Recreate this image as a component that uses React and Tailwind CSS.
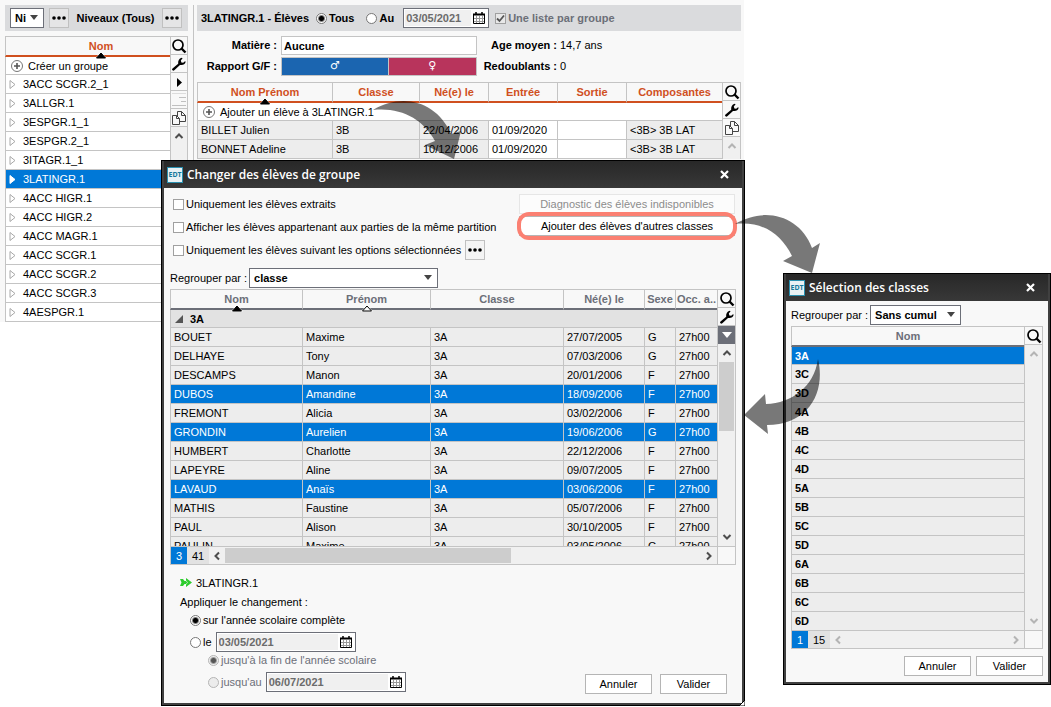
import React from 'react';

const groupes = [
  '3ACC SCGR.2_1', '3ALLGR.1', '3ESPGR.1_1', '3ESPGR.2_1', '3ITAGR.1_1', '3LATINGR.1', '4ACC HIGR.1',
  '4ACC HIGR.2', '4ACC MAGR.1', '4ACC SCGR.1', '4ACC SCGR.2', '4ACC SCGR.3', '4AESPGR.1',
];

const inscrits = [
  { nom: 'BILLET Julien', classe: '3B', ne: '22/04/2006', entree: '01/09/2020', composantes: '<3B> 3B LAT' },
  { nom: 'BONNET Adeline', classe: '3B', ne: '10/12/2006', entree: '01/09/2020', composantes: '<3B> 3B LAT' },
];

const eleves = [
  ['BOUET', 'Maxime', '27/07/2005', 'G'],
  ['DELHAYE', 'Tony', '07/03/2006', 'G'],
  ['DESCAMPS', 'Manon', '20/01/2006', 'F'],
  ['DUBOS', 'Amandine', '18/09/2006', 'F'],
  ['FREMONT', 'Alicia', '03/02/2006', 'F'],
  ['GRONDIN', 'Aurelien', '19/06/2006', 'G'],
  ['HUMBERT', 'Charlotte', '22/12/2006', 'F'],
  ['LAPEYRE', 'Aline', '09/07/2005', 'F'],
  ['LAVAUD', 'Anaïs', '03/06/2006', 'F'],
  ['MATHIS', 'Faustine', '05/07/2006', 'F'],
  ['PAUL', 'Alison', '30/10/2005', 'F'],
  ['PAULIN', 'Maxime', '03/05/2006', 'G'],
];
const selection = ['DUBOS', 'GRONDIN', 'LAVAUD'];

const classes = ['3A', '3C', '3D', '4A', '4B', '4C', '4D', '5A', '5B', '5C', '5D', '6A', '6B', '6C', '6D'];

/* Icons */
const SearchIcon = () => (
  <svg viewBox="0 0 16 16" className="w-4 h-4" fill="none" stroke="#000">
    <circle cx="7" cy="7" r="5" strokeWidth="1.7" />
    <path d="M10.5 10.5l4 4" strokeWidth="2.4" />
  </svg>
);

const WrenchIcon = () => (
  <svg viewBox="0 0 16 16" className="w-4 h-4" fill="#000">
    <path d="M1.500 14.300a1.200 1.200 0 0 1 0-1.800L7.200 7.800C6.800 5 8 2.400 10.800 1.800L11.600 2.300L9.800 4.600L10.400 6.400L12.200 6.800L14 5.200L14.700 5.800C14 8.300 11.800 9.600 9 8.900L3.300 14.300a1.300 1.300 0 0 1-1.800 0z" />
  </svg>
);

const PagesIcon = () => (
  <svg viewBox="0 0 16 16" className="w-4 h-4" fill="#f8f8f8" stroke="#444">
    <path d="M6.500 1.500h4l4 4v6h-8z" />
    <path d="M10.500 1.500v4h4" fill="none" />
    <path d="M1.500 5.500h4l3 3v6h-7z" />
    <path d="M5.500 5.500v3h3" fill="none" />
  </svg>
);

const IndentIcon = () => (
  <svg viewBox="0 0 16 16" className="w-4 h-4" stroke="#c0c0c0">
    <path d="M1 1.500h14" stroke="#dcdcdc" />
    <path d="M8 5.500h7M10 9.500h5M1 13.500h14" />
  </svg>
);

const PlayIcon = () => (
  <svg viewBox="0 0 16 16" className="w-4 h-4">
    <path d="M6 4l5 4.500l-5 4.500z" fill="#000" />
  </svg>
);

const Chevron = ({ d, off }) => (
  <svg viewBox="0 0 10 10" className="w-2.5 h-2.5" fill="none" stroke={off ? '#b4b4b4' : '#4d4d4d'} strokeWidth="2">
    <path d={d} />
  </svg>
);
const UP = 'M1.500 7L5 3.500L8.500 7';
const DOWN = 'M1.500 3L5 6.500L8.500 3';
const LEFT = 'M7 1.500L3.500 5L7 8.500';
const RIGHT = 'M3 1.500L6.500 5L3 8.500';

const CalendarIcon = () => (
  <svg viewBox="0 0 12 12" className="w-3 h-3" fill="none" stroke="#000">
    <path d="M.5 2.500h11v9H.5z" />
    <path d="M0 2.500h12" strokeWidth="2" />
    <path d="M3 0v3M9 0v3" strokeWidth="1.500" />
    <path d="M3.500 4v7M6.500 4v7M9.500 4v7M1 6.500h10M1 9.500h10" stroke="#999" />
  </svg>
);

const PlusIcon = () => (
  <svg viewBox="0 0 14 14" className="w-3.5 h-3.5 shrink-0" fill="none">
    <circle cx="7" cy="7" r="5.500" stroke="#777" />
    <path d="M7 4v6M4 7h6" stroke="#555" strokeWidth="1.600" />
  </svg>
);

const SortMark = ({ fill }) => (
  <svg viewBox="0 0 12 7" className="absolute left-1/2 -bottom-1 -ml-1.5 w-3 h-[7px]">
    <path d="M6 0l6 6.500H0z" fill="#fff" />
    <path d="M6 1l4.500 5h-9z" fill={fill} stroke="#000" />
  </svg>
);

const Expander = ({ active }) => (
  <svg viewBox="0 0 7 11" className="w-[7px] h-[11px] shrink-0">
    <path d="M1 1.500l5 4l-5 4z" fill="#fff" stroke={active ? '#fff' : '#a8a8a8'} />
  </svg>
);

const DotsButton = ({ label }) => (
  <button aria-label={label} className="flex w-5 h-5 items-center justify-center border border-[#c0c0c0] bg-[#f0f0f0]/50">
    <svg viewBox="0 0 14 4" className="w-3.5 h-1">
      <circle cx="2" cy="2" r="1.800" /><circle cx="7" cy="2" r="1.800" /><circle cx="12" cy="2" r="1.800" />
    </svg>
  </button>
);

/* Controls */
const Select = ({ label, value, className }) => (
  <span className={`relative flex h-5 ${className}`}>
    <select aria-label={label} className="w-full appearance-none border border-[#6c6f78] bg-white pl-1 text-[11px] font-bold leading-4 outline-none">
      <option>{value}</option>
    </select>
    <svg viewBox="0 0 8 5" className="absolute right-1.5 top-[7px] w-2 h-[5px]"><path d="M0 0h8L4 5z" fill="#444" /></svg>
  </span>
);

const Radio = ({ name, label, checked, disabled, className = '' }) => (
  <label className={`flex items-center gap-0.5 ${disabled ? 'text-[#6c6f78]' : ''} ${className}`}>
    <input
      type="radio"
      name={name}
      defaultChecked={checked}
      disabled={disabled}
      className="w-[11px] h-[11px] shrink-0 appearance-none rounded-full border border-[#777] bg-white checked:bg-[radial-gradient(circle,#000_2px,#fff_4px)] disabled:border-[#b5b5b5] disabled:bg-[#ececec] disabled:checked:bg-[radial-gradient(circle,#555_2px,#eee_4px)]"
    />
    {label}
  </label>
);

const Check = ({ label, checked, disabled }) => (
  <label className={`relative flex items-center gap-0.5 ${disabled ? 'text-[#6c6f78]' : ''}`}>
    <input type="checkbox" defaultChecked={checked} disabled={disabled} className="w-[11px] h-[11px] shrink-0 appearance-none border border-[#a0a0a0] bg-white disabled:bg-[#e8e8e8]" />
    {checked && (
      <svg viewBox="0 0 11 11" className="absolute left-0 w-[11px] h-[11px]" fill="none" stroke="#555" strokeWidth="1.800"><path d="M2 5.500l2.500 2.500L9 2.500" /></svg>
    )}
    {label}
  </label>
);

const DateField = ({ value, label, className }) => (
  <span className={`flex h-5 items-center border border-[#6c6f78] bg-white p-px ${className}`}>
    <input type="text" aria-label={label} defaultValue={value} disabled className="min-w-0 h-4 flex-1 bg-[#f0f0f0] px-px font-bold text-[#6b6b6b]" />
    <button aria-label="Calendrier" className="px-0.5"><CalendarIcon /></button>
  </span>
);

const Button = ({ children, disabled, className = '' }) => (
  <button disabled={disabled} className={`h-5 border border-[#b5b5b5] bg-white text-center disabled:border-[#e6e6e6] disabled:bg-[#fcfcfc] disabled:text-[#8c8c8c] ${className}`}>
    {children}
  </button>
);

const Tool = ({ label, children }) => (
  <button aria-label={label} className="flex h-[18px] shrink-0 items-center justify-center border-b border-[#c4c4c4]">{children}</button>
);

/* Column header, underlined in the colour of its table */
const Th = ({ children, sort, blue, className = '' }) => (
  <th className={`h-[21px] border-b-2 border-l border-t border-l-[#c4c4c4] border-t-[#c4c4c4] py-0 pr-0 text-center font-bold ${blue ? 'border-b-[#6c6f78] text-[#6c6f78]' : 'border-b-[#d0501f] text-[#d0501f]'} ${className}`}>
    <div className="relative h-[18px] leading-[18px]">
      {children}
      {sort && <SortMark fill={sort} />}
    </div>
  </th>
);

const Td = ({ children, first, className = '' }) => (
  <td className={`${first ? 'h-[18px]' : 'h-[19px]'} border-b border-l border-[#c4c4c4] py-0 pl-[3px] pr-0 whitespace-nowrap ${className}`}>{children}</td>
);

const TableFooter = ({ selected, total, off, thumb }) => (
  <div className="flex h-[18px] border border-t-0 border-[#c4c4c4]">
    <div className="flex min-w-0 flex-1 items-center bg-[#f0f0f0]">
      <span className="flex w-4 h-full items-center justify-center bg-[#0078d7] text-white">{selected}</span>
      <span className="flex w-[22px] h-full items-center justify-center bg-[#e2e2e2]">{total}</span>
      <span className="flex w-4 justify-center"><Chevron d={LEFT} off={off} /></span>
      <span className="flex-1">{thumb && <span className="block w-3/5 h-[15px] bg-[#cdcdcd]" />}</span>
      <span className="flex w-4 justify-center"><Chevron d={RIGHT} off={off} /></span>
    </div>
    <div className="w-[18px] border-l border-[#c4c4c4]" />
  </div>
);

const Dialog = ({ title, children, className }) => (
  <section role="dialog" aria-label={title} className={`absolute border border-black bg-[#404040] p-0.5 pt-0 ${className}`}>
    <header className="flex h-[27px] items-center bg-gradient-to-b from-[#282828] to-[#383838] pl-[3px] pr-[13px] text-white">
      <span className="flex w-4 h-4 items-center justify-center border border-[#2a8fae] bg-[#e9f1f4] font-['Noto_Sans'] text-[7px] font-bold text-[#16799b]">EDT</span>
      <h2 className="ml-1 flex-1 font-['Open_Sans',sans-serif] text-[12px] font-semibold">{title}</h2>
      <button aria-label="Fermer">
        <svg viewBox="0 0 9 9" className="w-[9px] h-[9px]" stroke="#fff" strokeWidth="2.200"><path d="M1 1l7 7M8 1l-7 7" /></svg>
      </button>
    </header>
    <div className="bg-[#f8f8f8]">{children}</div>
  </section>
);

const ListeGroupes = () => (
  <aside className="w-[183px] shrink-0">
    <div className="mb-[5px] flex h-[26px] items-center bg-[#dadbdd] pl-[5px] pr-1.5 font-bold">
      <Select label="Niveau" value="Ni" className="w-[34px]" />
      <span className="ml-[5px]"><DotsButton label="Choisir" /></span>
      <span className="flex-1 text-center">Niveaux (Tous)</span>
      <DotsButton label="Niveaux" />
    </div>
    <div className="flex">
      <table className="flex-1 table-fixed border-separate border-spacing-0 bg-white">
        <thead className="bg-[#f8f8f8]"><tr><Th sort="#000" className="w-[165px] pl-[26px]">Nom</Th></tr></thead>
        <tbody>
          <tr>
            <Td first>
              <button className="flex items-center gap-1 pl-px"><PlusIcon />Créer un groupe</button>
            </Td>
          </tr>
          {groupes.map(g => {
            const active = g === '3LATINGR.1';
            return (
              <tr key={g} className={active ? 'bg-[#0078d7] text-white' : ''}>
                <Td><span className="flex items-center gap-[7px]"><Expander active={active} />{g}</span></Td>
              </tr>
            );
          })}
        </tbody>
      </table>
      <div className="flex w-[18px] flex-col border border-[#c4c4c4] border-b-0">
        <Tool label="Rechercher"><SearchIcon /></Tool>
        <Tool label="Outils"><WrenchIcon /></Tool>
        <Tool label="Déplier"><PlayIcon /></Tool>
        <Tool label="Retrait"><IndentIcon /></Tool>
        <Tool label="Copier"><PagesIcon /></Tool>
        <div className="flex flex-1 justify-center bg-[#f0f0f0] pt-1"><Chevron d={UP} /></div>
      </div>
    </div>
  </aside>
);

const ListeEleves = () => (
  <main className="min-w-0 flex-1">
    <div className="mb-[5px] flex h-[26px] items-center bg-[#dadbdd] pl-1 font-bold whitespace-nowrap">
      <h1>3LATINGR.1 - Élèves</h1>
      <Radio name="vue" label="Tous" checked className="ml-[7px]" />
      <Radio name="vue" label="Au" className="ml-3" />
      <DateField label="Au" value="03/05/2021" className="ml-[9px] mr-[6px] w-[86px]" />
      <Check label="Une liste par groupe" checked disabled />
    </div>

    <div className="mb-1.5 flex">
      <div className="grid grid-cols-[80px_196px] gap-x-1 gap-y-0.5 font-bold">
        <label htmlFor="matiere" className="text-right leading-[19px]">Matière :</label>
        <input id="matiere" type="text" defaultValue="Aucune" className="h-[19px] border border-[#c4c4c4] bg-white px-0.5 font-bold" />
        <span className="text-right leading-[19px]">Rapport G/F :</span>
        <div className="grid h-[19px] grid-cols-[11fr_9fr] border border-[#c4c4c4] text-center font-['DejaVu_Sans'] font-normal leading-4 text-white">
          <span className="border-r border-[#c4c4c4] bg-[#1b65b0]">♂</span>
          <span className="bg-[#b8345c]">♀</span>
        </div>
      </div>
      <dl className="grid auto-rows-[19px] grid-cols-[80px_auto] gap-x-[3px] gap-y-0.5 leading-[19px] whitespace-nowrap">
        <dt className="text-right font-bold">Age moyen :</dt><dd>14,7 ans</dd>
        <dt className="text-right font-bold">Redoublants :</dt><dd>0</dd>
      </dl>
    </div>

    <div className="flex">
      <table className="min-w-0 flex-1 table-fixed border-separate border-spacing-0">
        <thead>
          <tr>
            <Th sort="#000" className="w-[135px] pl-0">Nom Prénom</Th>
            <Th className="w-[87px] pl-0">Classe</Th>
            <Th className="w-[69px] pl-0">Né(e) le</Th>
            <Th className="w-[69px] pl-0">Entrée</Th>
            <Th className="w-[69px] pl-0">Sortie</Th>
            <Th className="pl-0">Composantes</Th>
          </tr>
        </thead>
        <tbody className="bg-[#ededed]">
          <tr className="bg-white">
            <td colSpan={6} className="h-[18px] border-b border-l border-[#c4c4c4] p-0">
              <button className="flex items-center gap-1 pl-1"><PlusIcon />Ajouter un élève à 3LATINGR.1</button>
            </td>
          </tr>
          {inscrits.map(e => (
            <tr key={e.nom}>
              <Td>{e.nom}</Td>
              <Td>{e.classe}</Td>
              <Td>{e.ne}</Td>
              <Td className="bg-white">{e.entree}</Td>
              <Td className="bg-white" />
              <Td>{e.composantes}</Td>
            </tr>
          ))}
        </tbody>
      </table>
      <div className="flex w-[19px] flex-col border border-[#c4c4c4] border-b-0">
        <Tool label="Rechercher"><SearchIcon /></Tool>
        <Tool label="Outils"><WrenchIcon /></Tool>
        <Tool label="Copier"><PagesIcon /></Tool>
        <div className="flex flex-1 justify-center bg-[#f0f0f0] pt-1"><Chevron d={UP} off /></div>
      </div>
    </div>
  </main>
);

const ChangerGroupe = () => (
  <Dialog title="Changer des élèves de groupe" className="left-[161px] top-[160px] w-[584px]">
    <div className="px-1.5 pb-[9px] pt-1.5">
      <div className="flex justify-between pl-[3px] pr-px">
        <div className="flex flex-col">
          <div className="flex h-5 items-center"><Check label="Uniquement les élèves extraits" /></div>
          <div className="mt-[3px] flex h-5 items-center"><Check label="Afficher les élèves appartenant aux parties de la même partition" /></div>
          <div className="mt-[3px] flex h-5 items-center gap-1">
            <Check label="Uniquement les élèves suivant les options sélectionnées" />
            <DotsButton label="Options" />
          </div>
        </div>
        <div className="flex w-[216px] flex-col gap-0.5">
          <Button disabled>Diagnostic des élèves indisponibles</Button>
          <div className="relative flex flex-col">
            <Button>Ajouter des élèves d'autres classes</Button>
            <span className="pointer-events-none absolute -inset-x-0.5 -inset-y-1 rounded-xl border-4 border-[#fb8072]" />
          </div>
        </div>
      </div>

      <div className="mt-2 flex items-center gap-0.5">
        Regrouper par :
        <Select label="Regrouper par" value="classe" className="w-[189px]" />
      </div>

      <div className="mt-px flex">
        <div className="h-[258px] min-w-0 flex-1 overflow-hidden border-b border-[#c4c4c4]">
          <table className="w-full table-fixed border-separate border-spacing-0">
            <thead>
              <tr>
                <Th blue sort="#000" className="w-[132px] pl-0">Nom</Th>
                <Th blue sort="#fff" className="w-[128px] pl-0">Prénom</Th>
                <Th blue className="pl-0">Classe</Th>
                <Th blue className="w-[81px] pl-0">Né(e) le</Th>
                <Th blue className="w-[31px] pl-0">Sexe</Th>
                <Th blue className="w-[42px] pl-0 whitespace-nowrap">Occ. a..</Th>
              </tr>
            </thead>
            <tbody className="bg-[#ededed]">
              <tr className="bg-[#e2e2e2] font-bold">
                <td colSpan={6} className="h-[18px] border-b border-l border-[#c4c4c4] p-0">
                  <span className="flex items-center gap-[7px] pl-1">
                    <svg viewBox="0 0 8 8" className="w-2 h-2"><path d="M8 0v8H0z" fill="#555" /></svg>
                    3A
                  </span>
                </td>
              </tr>
              {eleves.map(([nom, prenom, ne, sexe]) => (
                <tr key={nom} className={selection.includes(nom) ? 'bg-[#0078d7] text-white' : ''}>
                  <Td>{nom}</Td>
                  <Td>{prenom}</Td>
                  <Td>3A</Td>
                  <Td>{ne}</Td>
                  <Td>{sexe}</Td>
                  <Td>27h00</Td>
                </tr>
              ))}
            </tbody>
          </table>
        </div>
        <div className="flex w-[19px] flex-col border border-[#c4c4c4]">
          <Tool label="Rechercher"><SearchIcon /></Tool>
          <Tool label="Outils"><WrenchIcon /></Tool>
          <button aria-label="Déplier" className="flex h-[18px] shrink-0 items-center justify-center bg-[#6c6f78]">
            <svg viewBox="0 0 10 6" className="w-2.5 h-1.5"><path d="M0 0h10L5 6z" fill="#fff" /></svg>
          </button>
          <div className="flex flex-1 flex-col items-center bg-[#f0f0f0]">
            <span className="py-1"><Chevron d={UP} /></span>
            <span className="w-[15px] h-[69px] bg-[#cdcdcd]" />
            <span className="mt-auto pb-1"><Chevron d={DOWN} /></span>
          </div>
        </div>
      </div>
      <TableFooter selected="3" total="41" thumb />

      <div className="flex items-end justify-between pl-2.5 pr-[9px] pt-2">
        <div className="pb-0.5">
          <p className="flex h-[19px] items-center gap-1">
            <svg viewBox="0 0 12 9" className="w-3 h-[9px]" fill="#2ecc2e"><path d="M0 1h3l1.500 2H6V0l6 4.500L6 9V6H4.500L3 8H0l1.500-3.500z" /><path d="M4.500 1l3 3.500l-3 3.500" fill="none" stroke="#fff" strokeWidth=".6" /></svg>
            3LATINGR.1
          </p>
          <p className="leading-5">Appliquer le changement :</p>
          <div className="flex flex-col pl-2.5">
            <Radio name="periode" label="sur l'année scolaire complète" checked className="h-4" />
            <div className="mt-1 flex items-center gap-1">
              <Radio name="periode" label="le" />
              <DateField label="le" value="03/05/2021" className="w-[140px]" />
            </div>
            <Radio name="fin" label="jusqu'à la fin de l'année scolaire" checked disabled className="ml-[18px] h-4" />
            <div className="ml-[18px] mt-1 flex items-center gap-1">
              <Radio name="fin" label="jusqu'au" disabled />
              <DateField label="jusqu'au" value="06/07/2021" className="w-[140px]" />
            </div>
          </div>
        </div>
        <div className="flex gap-2">
          <Button className="w-[67px]">Annuler</Button>
          <Button className="w-[67px]">Valider</Button>
        </div>
      </div>
    </div>
    {/* Resize grip */}
    <svg viewBox="0 0 6 6" className="absolute -bottom-px -right-px w-1.5 h-1.5"><path d="M6 0v6H0z" fill="#fff" stroke="#000" /></svg>
  </Dialog>
);

const SelectionClasses = () => (
  <Dialog title="Sélection des classes" className="left-[783px] top-[273px] w-[268px]">
    <div className="px-[5px] pb-1.5 pt-1">
      <div className="flex items-center gap-0.5">
        Regrouper par :
        <Select label="Regrouper par" value="Sans cumul" className="w-[91px]" />
      </div>
      <div className="mt-px flex">
        <table className="min-w-0 flex-1 table-fixed border-separate border-spacing-0">
          <thead><tr><Th blue className="pl-0">Nom</Th></tr></thead>
          <tbody className="bg-[#ededed] font-bold">
            {classes.map((c, i) => (
              <tr key={c} className={i === 0 ? 'bg-[#0078d7] text-white' : ''}>
                <Td first={i === 0}>{c}</Td>
              </tr>
            ))}
          </tbody>
        </table>
        <div className="flex w-[19px] flex-col border border-[#c4c4c4]">
          <Tool label="Rechercher"><SearchIcon /></Tool>
          <div className="flex flex-1 flex-col items-center justify-between bg-[#f0f0f0] py-1">
            <Chevron d={UP} off />
            <Chevron d={DOWN} off />
          </div>
        </div>
      </div>
      <TableFooter selected="1" total="15" off />
      <div className="mt-[7px] flex justify-end gap-[5px]">
        <Button className="w-[67px]">Annuler</Button>
        <Button className="w-[67px]">Valider</Button>
      </div>
    </div>
  </Dialog>
);

export default function App() {
  return (
    <div className="relative min-h-screen overflow-hidden bg-white font-['Liberation_Sans',Arial,sans-serif] text-[11px] leading-4 text-black">
      <div className="mr-[307px] flex bg-[#f8f8f8] pl-[5px] pr-[3px] pt-[5px]">
        <ListeGroupes />
        <div className="ml-[5px] mr-[3px] w-px bg-[#c4c4c4]" />
        <ListeEleves />
      </div>

      <ChangerGroupe />
      <SelectionClasses />

      {/* Arrows linking each step to the next */}
      <svg viewBox="0 0 88 59" className="pointer-events-none absolute left-[373px] top-[100px] w-[88px] h-[59px]" fill="#000" fillOpacity=".53">
        <path d="M0 10C30-8 64 2 78 34L88 31L81 59L52 45L62 41C50 19 28 7 0 10z" />
      </svg>
      <svg viewBox="0 0 86 60" className="pointer-events-none absolute left-[735px] top-[214px] w-[86px] h-[60px]" fill="#000" fillOpacity=".53">
        <path d="M0 10C30-8 65 2 77 34L85 29L77 59L48 47L57 42C46 20 28 7 0 10z" />
      </svg>
      <svg viewBox="0 0 78 76" className="pointer-events-none absolute left-[744px] top-[359px] w-[78px] h-[76px]" fill="#000" fillOpacity=".53">
        <path d="M74 0C82 34 64 66 23 66L24 75L0 56L21 35L22 45C48 44 70 28 74 0z" />
      </svg>
    </div>
  );
}
